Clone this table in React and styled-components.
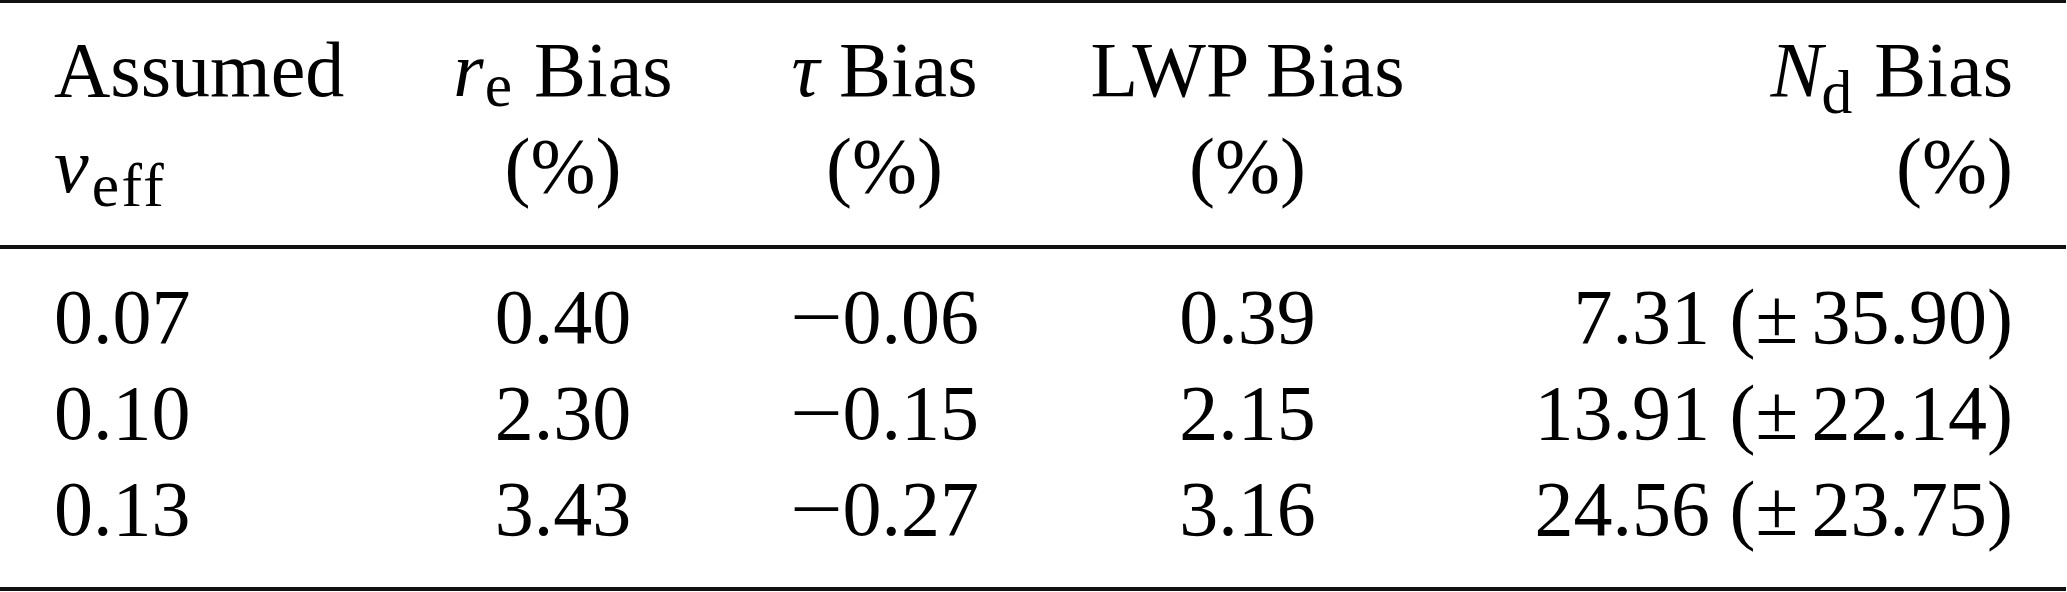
import React from "react";
import styled, { createGlobalStyle } from "styled-components";

const Global = createGlobalStyle`
  html, body { margin: 0; padding: 0; background: #fff; }
`;

const Table = styled.div`
  width: 2066px;
  font-family: "Liberation Serif", "Times New Roman", serif;
  font-size: 78px;
  line-height: 96px;
  color: #000;
  border-top: 3px solid #111;
  border-bottom: 4px solid #111;
`;

const Section = styled.div`
  display: grid;
  grid-template-columns: 366px 286px 357px 369px 581px;
  padding: ${(p) => p.$pt}px 53px ${(p) => p.$pb}px 54px;
  border-bottom: ${(p) => (p.$divider ? "4px solid #111" : "none")};
`;

const Cell = styled.div`
  text-align: ${(p) => p.$align || "left"};
  white-space: nowrap;
`;

const Line = styled.div`
  display: block;
`;

const Var = styled.span`
  font-style: italic;
`;

const Sub = styled.span`
  font-size: 0.79em;
  line-height: 0;
  letter-spacing: 0.04em;
  vertical-align: -${(p) => p.$drop}px;
  margin-left: ${(p) => p.$kern || 0}px;
`;

const Minus = styled.span`
  display: inline-block;
  transform: scaleX(1.2);
  transform-origin: left center;
  margin-right: 0.11em;
`;

const PM = styled.span`
  margin-right: 0.17em;
`;

const aligns = ["left", "center", "center", "center", "right"];

const rows = [
  ["0.07", "0.40", "0.06", "0.39", "7.31", "35.90"],
  ["0.10", "2.30", "0.15", "2.15", "13.91", "22.14"],
  ["0.13", "3.43", "0.27", "3.16", "24.56", "23.75"],
];

export default function App() {
  return (
    <>
      <Global />
      <Table>
        <Section $pt={19} $pb={31} $divider>
          <Cell $align={aligns[0]}>
            <Line>Assumed</Line>
            <Line>
              <Var>v</Var>
              <Sub $drop={14} $kern={3}>eff</Sub>
            </Line>
          </Cell>
          <Cell $align={aligns[1]}>
            <Line>
              <Var>r</Var>
              <Sub $drop={10} $kern={1}>e</Sub> Bias
            </Line>
            <Line>(%)</Line>
          </Cell>
          <Cell $align={aligns[2]}>
            <Line>
              <Var>τ</Var> Bias
            </Line>
            <Line>(%)</Line>
          </Cell>
          <Cell $align={aligns[3]}>
            <Line>LWP Bias</Line>
            <Line>(%)</Line>
          </Cell>
          <Cell $align={aligns[4]}>
            <Line>
              <Var>N</Var>
              <Sub $drop={17} $kern={-1}>d</Sub> Bias
            </Line>
            <Line>(%)</Line>
          </Cell>
        </Section>
        <Section $pt={20} $pb={30}>
          {rows.map((r) => (
            <React.Fragment key={r[0]}>
              <Cell $align={aligns[0]}>{r[0]}</Cell>
              <Cell $align={aligns[1]}>{r[1]}</Cell>
              <Cell $align={aligns[2]}>
                <Minus>−</Minus>
                {r[2]}
              </Cell>
              <Cell $align={aligns[3]}>{r[3]}</Cell>
              <Cell $align={aligns[4]}>
                {r[4]} (<PM>±</PM>
                {r[5]})
              </Cell>
            </React.Fragment>
          ))}
        </Section>
      </Table>
    </>
  );
}
